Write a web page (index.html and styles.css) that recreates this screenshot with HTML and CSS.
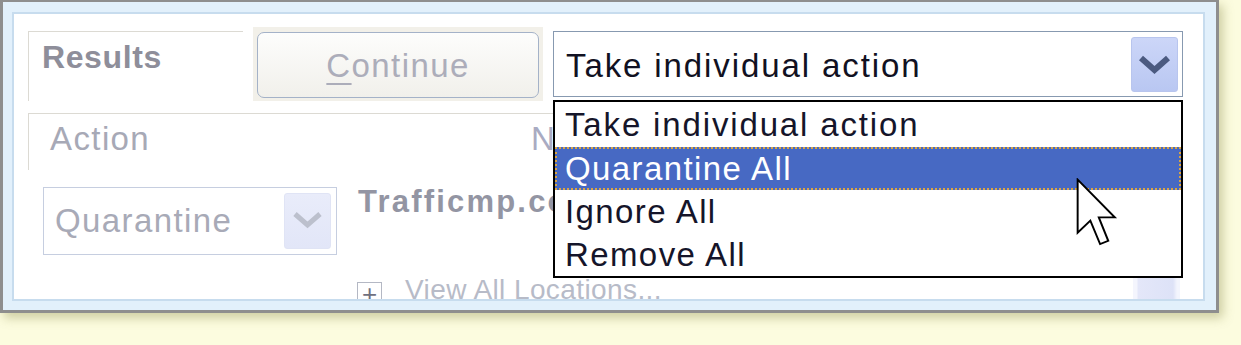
FILE: index.html
```html
<!DOCTYPE html>
<html>
<head>
<meta charset="utf-8">
<link rel="stylesheet" href="styles.css">
</head>
<body>
<div class="window">
  <div class="pane">
    <div class="toprow">
      <div class="tab">Results</div>
      <div class="btn-halo">
        <div class="btn"><span class="ul">C</span>ontinue</div>
      </div>
      <div class="select main">
        <span class="sel-text">Take individual action</span>
        <span class="arrow">
          <svg width="45" height="53" viewBox="0 0 45 53"><polyline points="9,20 22.5,32 36,20" fill="none" stroke="#4b5a80" stroke-width="6"/></svg>
        </span>
      </div>
    </div>
    <div class="header">
      <div class="col-action">Action</div>
      <div class="col-name">Name</div>
    </div>
    <div class="row">
      <div class="select small">
        <span class="sel-text">Quarantine</span>
        <span class="arrow">
          <svg width="45" height="54" viewBox="0 0 45 54"><polyline points="10,20 22.5,31 35,20" fill="none" stroke="#bcc0cd" stroke-width="5"/></svg>
        </span>
      </div>
      <div class="namecell">
        <div class="threat">Trafficmp.com</div>
        <div class="loc"><span class="plus">+</span><span class="loc-text">View All Locations...</span></div>
      </div>
      <div class="scroll"></div>
    </div>
    <ul class="dropdown">
      <li class="opt first">Take individual action</li>
      <li class="opt selected">Quarantine All</li>
      <li class="opt">Ignore All</li>
      <li class="opt">Remove All</li>
    </ul>
    <svg class="cursor" width="43" height="69" viewBox="-0.5 -0.5 13.2 21.2">
      <path d="M0 0 V16.3 L3.9 12.6 L6.9 19.8 L9.4 18.8 L6.5 11.6 H11.4 Z" fill="#fff" stroke="#000" stroke-width="0.6" stroke-linejoin="miter"/>
    </svg>
  </div>
</div>
</body>
</html>
```

FILE: styles.css
```css
html, body {
  margin: 0;
  padding: 0;
}
body {
  background: #fcfcdf;
  width: 1241px;
  height: 345px;
  overflow: hidden;
  font-family: "Liberation Sans", Arial, sans-serif;
}
.window {
  width: 1219px;
  height: 313px;
  box-sizing: border-box;
  border-style: solid;
  border-color: #8e8e8e;
  border-width: 2px 3px 3px 3px;
  background: #e2f0fb;
  padding: 10px 11px 9px 9px;
  box-shadow: 4px 5px 10px rgba(120, 120, 50, 0.35);
}
.pane {
  position: relative;
  box-sizing: border-box;
  width: 1193px;
  height: 289px;
  border: 2px solid #c7dcee;
  background: #fff;
  overflow: hidden;
}
.toprow {
  display: flex;
  align-items: flex-start;
  padding: 13px 0 0 14px;
}
.tab {
  box-sizing: border-box;
  width: 215px;
  height: 70px;
  margin-top: 4px;
  border-top: 1px solid #dcdad3;
  border-left: 1px solid #dcdad3;
  padding: 7px 0 0 13px;
  font-size: 32px;
  line-height: 36px;
  font-weight: bold;
  letter-spacing: 0.6px;
  color: #8e8e9a;
}
.btn-halo {
  box-sizing: border-box;
  width: 290px;
  height: 74px;
  margin-left: 10px;
  padding: 5px 4px 3px 4px;
  background: #f2f0e9;
}
.btn {
  box-sizing: border-box;
  height: 66px;
  border: 1px solid #a4b2c8;
  border-radius: 7px;
  background: linear-gradient(#fdfdfc, #f1f0eb);
  display: flex;
  align-items: center;
  justify-content: center;
  font-size: 33px;
  line-height: 38px;
  letter-spacing: 1.4px;
  color: #acadba;
  padding-top: 2px;
}
.ul {
  text-decoration: underline;
  text-decoration-thickness: 2px;
  text-underline-offset: 6px;
}
.select {
  box-sizing: border-box;
  display: flex;
  align-items: center;
  justify-content: space-between;
  background: #fff;
}
.select.main {
  width: 630px;
  height: 66px;
  margin-left: 10px;
  margin-top: 4px;
  border: 1px solid #8799b0;
  padding-left: 12px;
}
.sel-text {
  font-size: 33px;
  line-height: 38px;
  letter-spacing: 1.4px;
}
.main .sel-text {
  color: #111122;
  padding-top: 3px;
  letter-spacing: 1.9px;
}
.arrow {
  box-sizing: border-box;
  display: flex;
  border-radius: 3px;
}
.main .arrow {
  width: 47px;
  height: 55px;
  margin-right: 4px;
  background: linear-gradient(#ccd6f8, #b9c7f2);
  border: 1px solid #b8c5ee;
  margin-top: 1px;
}
.header {
  display: flex;
  box-sizing: border-box;
  width: 1155px;
  height: 57px;
  margin: 12px 0 0 14px;
  border-top: 1px solid #dcdad3;
  border-left: 1px solid #dcdad3;
  font-size: 33px;
  line-height: 38px;
  letter-spacing: 1.4px;
  color: #a7a9b6;
}
.col-action {
  box-sizing: border-box;
  width: 502px;
  padding: 6px 0 0 21px;
}
.col-name {
  padding-top: 6px;
  color: #a9abc2;
}
.row {
  display: flex;
  align-items: flex-start;
  margin-top: 17px;
  padding-left: 29px;
}
.select.small {
  width: 294px;
  height: 68px;
  border: 1px solid #c6cee0;
  padding-left: 11px;
}
.small .sel-text {
  color: #a8aab7;
}
.small .arrow {
  width: 47px;
  height: 56px;
  margin-right: 5px;
  background: linear-gradient(#e9ecfa, #e2e6f8);
  border: 1px solid #e0e4f5;
}
.namecell {
  margin-left: 20px;
  display: flex;
  flex-direction: column;
  white-space: nowrap;
}
.threat {
  margin-top: -3px;
  padding-left: 1px;
  font-size: 31px;
  line-height: 36px;
  font-weight: bold;
  letter-spacing: 2.2px;
  color: #9395a3;
}
.loc {
  display: flex;
  align-items: flex-start;
  margin-top: 51px;
}
.plus {
  box-sizing: border-box;
  width: 25px;
  height: 22px;
  margin-top: 11px;
  margin-right: 23px;
  border: 1px solid #b4b8c4;
  font-size: 26px;
  line-height: 22px;
  text-align: center;
  color: #6f7080;
}
.loc-text {
  font-size: 28px;
  line-height: 38px;
  letter-spacing: 0.4px;
  color: #b7bbc8;
}
.scroll {
  margin-left: auto;
  margin-right: 23px;
  margin-top: 91px;
  width: 47px;
  height: 30px;
  background: linear-gradient(90deg, #f4f5fd 0, #f4f5fd 4px, #e4e7f9 5px, #dde2f7 40px, #f3f5fd 44px);
}
.dropdown {
  position: absolute;
  left: 539px;
  top: 86px;
  width: 630px;
  box-sizing: border-box;
  margin: 0;
  padding: 0;
  list-style: none;
  border: 2px solid #000;
  background: #fff;
}
.opt {
  height: 43px;
  line-height: 43px;
  padding-left: 10px;
  font-size: 33px;
  letter-spacing: 1.4px;
  color: #15152a;
  white-space: nowrap;
}
.opt.first {
  height: 45px;
  line-height: 45px;
  letter-spacing: 1.85px;
}
.opt.selected {
  background: #4769c3;
  color: #fff;
  outline: 2px dotted #d9a443;
  outline-offset: -2px;
}
.cursor {
  position: absolute;
  left: 1062px;
  top: 164px;
}
```
